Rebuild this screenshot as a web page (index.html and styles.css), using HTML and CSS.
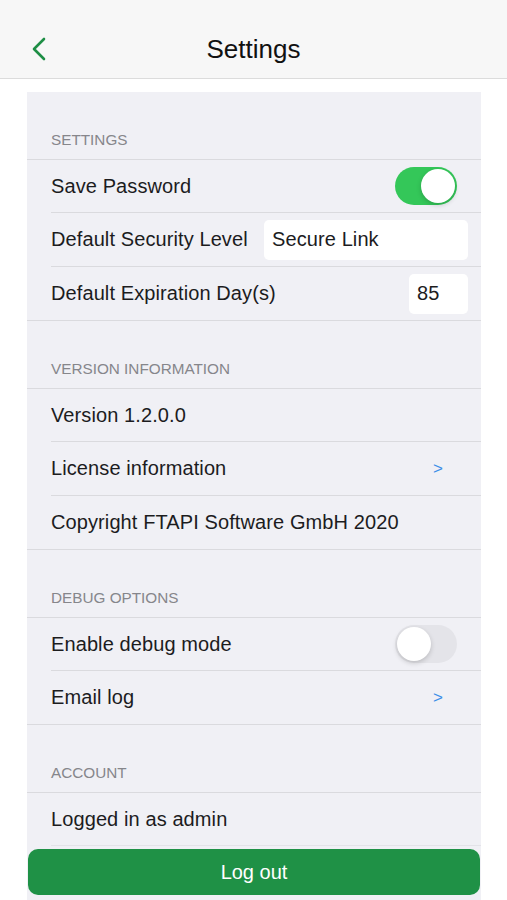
FILE: index.html
```html
<!DOCTYPE html>
<html lang="en">
<head>
  <meta charset="UTF-8">
  <meta name="viewport" content="width=device-width, initial-scale=1.0">
  <title>Settings</title>
  <link rel="stylesheet" href="styles.css">
</head>
<body>
  <div class="navbar">
    <div class="back">
      <svg width="16" height="24" viewBox="0 0 16 24"><polyline points="13,2 3,12 13,22" fill="none" stroke="#1e8e45" stroke-width="2.6" stroke-linecap="round" stroke-linejoin="round"/></svg>
    </div>
    <div class="title">Settings</div>
  </div>

  <div class="main">
    <div class="panel">
      <div class="section-head">SETTINGS</div>
      <div class="group">
        <div class="row">
          <span>Save Password</span>
          <div class="toggle on"><i></i></div>
        </div>
        <div class="row">
          <span>Default Security Level</span>
          <div class="field wide">Secure Link</div>
        </div>
        <div class="row">
          <span>Default Expiration Day(s)</span>
          <div class="field small">85</div>
        </div>
      </div>

      <div class="section-head">VERSION INFORMATION</div>
      <div class="group">
        <div class="row"><span>Version 1.2.0.0</span></div>
        <div class="row">
          <span>License information</span>
          <span class="more">&gt;</span>
        </div>
        <div class="row"><span>Copyright FTAPI Software GmbH 2020</span></div>
      </div>

      <div class="section-head">DEBUG OPTIONS</div>
      <div class="group">
        <div class="row">
          <span>Enable debug mode</span>
          <div class="toggle"><i></i></div>
        </div>
        <div class="row">
          <span>Email log</span>
          <span class="more">&gt;</span>
        </div>
      </div>

      <div class="section-head">ACCOUNT</div>
      <div class="group account">
        <div class="row"><span>Logged in as admin</span></div>
      </div>
      <div class="logout">Log out</div>
    </div>
  </div>
</body>
</html>
```

FILE: styles.css
```css
* {
  box-sizing: border-box;
}

body {
  margin: 0;
  background: #fff;
  font-family: "Liberation Sans", Arial, sans-serif;
  color: #1c1c1e;
  height: 900px;
  overflow: hidden;
}

.navbar {
  height: 79px;
  background: #f7f7f7;
  border-bottom: 1px solid #dcdcdc;
  display: flex;
  align-items: flex-end;
  justify-content: center;
  padding-bottom: 14px;
  position: relative;
}

.back {
  position: absolute;
  left: 31px;
  top: 37px;
  width: 16px;
  height: 24px;
}

.back svg {
  display: block;
}

.title {
  font-size: 26px;
  line-height: 30px;
  color: #111;
}

.main {
  padding: 13px 26px 0 27px;
}

.panel {
  background: #f0f0f5;
  height: 808px;
}

.section-head {
  height: 68px;
  display: flex;
  align-items: flex-end;
  padding: 0 0 10px 24px;
  font-size: 15.3px;
  line-height: 18px;
  color: #86868b;
  border-bottom: 1px solid #dadade;
}

.group {
  border-bottom: 1px solid #dadade;
}

.row {
  height: 54px;
  margin-left: 24px;
  padding-right: 13px;
  display: flex;
  align-items: center;
  justify-content: space-between;
  font-size: 20px;
  letter-spacing: 0.1px;
  border-bottom: 1px solid #dadade;
}

.row:first-child {
  height: 53px;
}

.group .row:last-child {
  height: 53px;
  border-bottom: none;
}

.group.account {
  border-bottom: none;
}

.group.account .row:last-child {
  border-bottom: 1px solid #e3e3e8;
}

.toggle {
  width: 62px;
  height: 38px;
  border-radius: 19px;
  background: #e4e4e9;
  margin-right: 11px;
  padding: 2px;
  display: flex;
}

.toggle i {
  width: 34px;
  height: 34px;
  border-radius: 50%;
  background: #fff;
  box-shadow: 0 2px 5px rgba(0,0,0,.18);
}

.toggle.on {
  background: #34c759;
  justify-content: flex-end;
}

.field {
  background: #fff;
  height: 40px;
  border-radius: 5px;
  padding-left: 8px;
  display: flex;
  align-items: center;
  font-size: 20px;
}

.field.wide {
  width: 204px;
}

.field.small {
  width: 59px;
}

.more {
  color: #3b8ee8;
  font-size: 17px;
  margin-right: 25px;
}

.logout {
  margin: 3px 1px 0 1px;
  height: 46px;
  border-radius: 10px;
  background: #1f9146;
  color: #fff;
  font-size: 20px;
  display: flex;
  align-items: center;
  justify-content: center;
}
```
